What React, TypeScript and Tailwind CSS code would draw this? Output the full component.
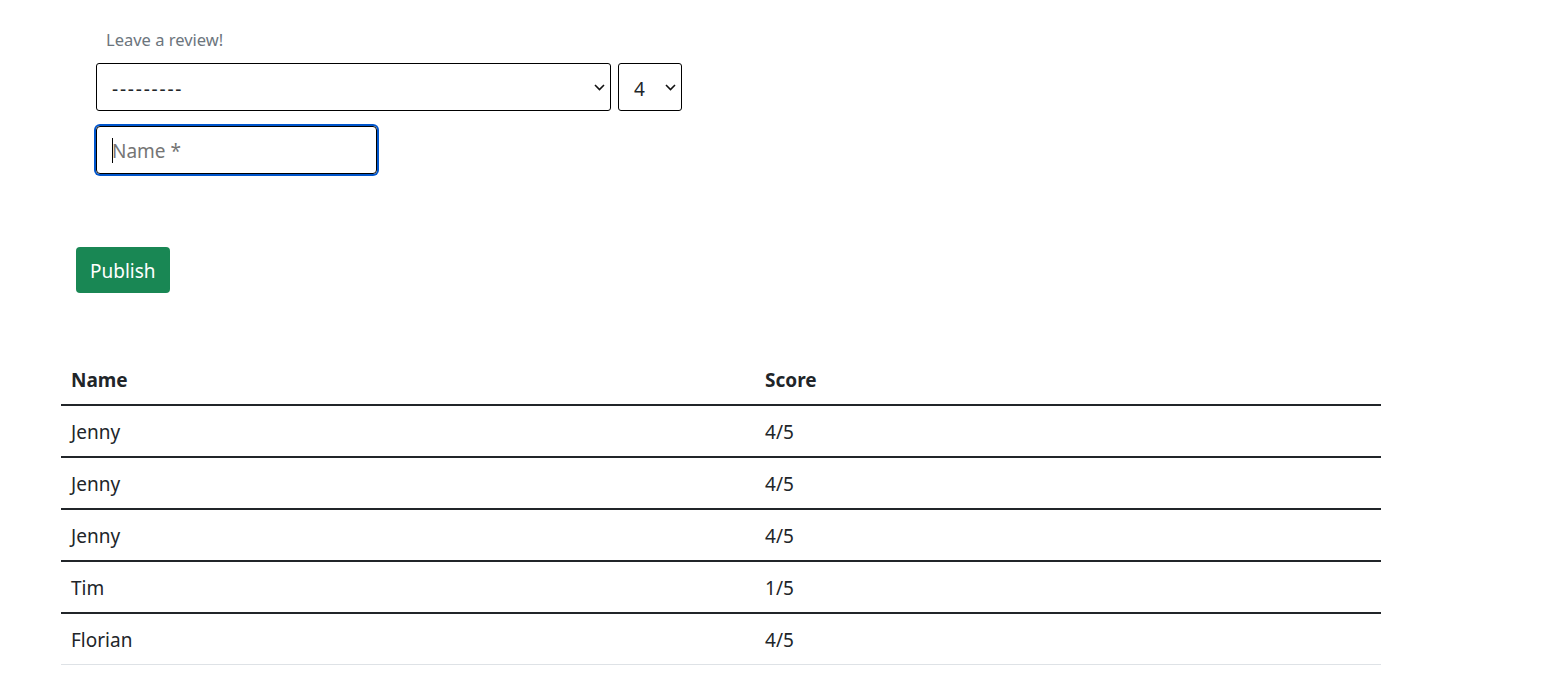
import React from "react";

type Review = {
    id: number;
    name: string;
    score: number;
};

const reviews: Review[] = [
    { id: 1, name: "Jenny", score: 4 },
    { id: 2, name: "Jenny", score: 4 },
    { id: 3, name: "Jenny", score: 4 },
    { id: 4, name: "Tim", score: 1 },
    { id: 5, name: "Florian", score: 4 },
];

function Chevron() {
    return (
        <svg width="11" height="7" viewBox="0 0 11 7" className="shrink-0">
            <path d="M1 1l4.5 4.5L10 1" fill="none" stroke="#111" strokeWidth="1.6" />
        </svg>
    );
}

export default function App() {
    return (
        <div className="min-h-screen bg-white text-[#212529] font-['Noto_Sans',sans-serif]">
            <div className="pl-[96px] pt-[29px]">
                <p className="pl-[10px] text-[16.5px] leading-[22px] text-[#6c757d]">Leave a review!</p>
                <div className="mt-[12px] flex gap-[7px]">
                    <div className="flex h-[48px] w-[515px] items-center justify-between rounded-[3px] border border-black pl-[15px] pr-[5px]">
                        <span className="pt-[5px] text-[19px] leading-none tracking-[1.8px]">---------</span>
                        <Chevron />
                    </div>
                    <div className="flex h-[48px] w-[64px] items-center justify-between rounded-[3px] border border-black pl-[15px] pr-[5px]">
                        <span className="pt-[4px] text-[19px] leading-none">4</span>
                        <Chevron />
                    </div>
                </div>
                <div className="relative mt-[15px] w-[281px]">
                    <input
                        placeholder="Name *"
                        className="h-[48px] w-full rounded-[4px] border border-black pl-[15px] pt-[2px] text-[19px] outline-none ring-2 ring-[#0055cc] placeholder:text-[#757575]"
                    />
                    <span className="absolute left-[16px] top-[12px] h-[25px] w-px bg-black" />
                </div>
            </div>

            <div className="pl-[76px] pt-[73px]">
                <button className="h-[46px] rounded-[4px] bg-[#198754] px-[14px] pt-[3px] text-[19px] text-white">Publish</button>
            </div>

            <div className="pl-[61px] pt-[61px]">
                <table className="w-[1320px] border-collapse text-left text-[19px]">
                    <thead>
                        <tr className="border-b-2 border-[#212529]">
                            <th className="w-[694px] px-[10px] pt-[11px] pb-[9px] leading-[30px] font-bold">Name</th>
                            <th className="px-[10px] pt-[11px] pb-[9px] leading-[30px] font-bold">Score</th>
                        </tr>
                    </thead>
                    <tbody>
                        {reviews.map((r, i) => (
                            <tr
                                key={r.id}
                                className={i === reviews.length - 1 ? "border-b border-[#dee2e6]" : "border-b-2 border-[#212529]"}
                            >
                                <td className="px-[10px] pt-[11px] pb-[9px] leading-[30px]">{r.name}</td>
                                <td className="px-[10px] pt-[11px] pb-[9px] leading-[30px]">{r.score}/5</td>
                            </tr>
                        ))}
                    </tbody>
                </table>
            </div>
        </div>
    );
}
